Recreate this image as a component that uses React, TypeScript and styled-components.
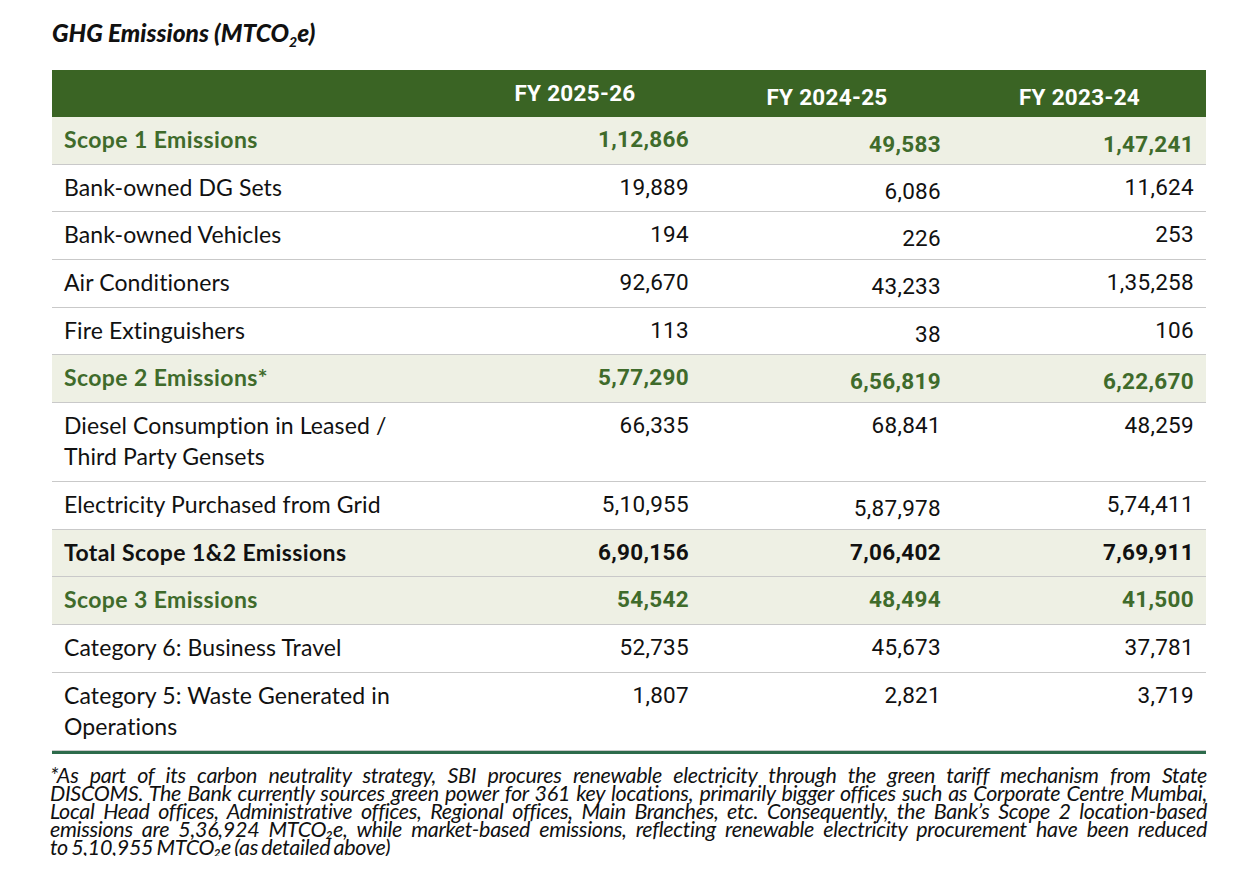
import styled, { createGlobalStyle } from "styled-components";

const GlobalStyle = createGlobalStyle`
  body {
    margin: 0;
    background: #ffffff;
    font-family: "Lato", "Noto Sans", sans-serif;
    color: #111;
  }
`;

type Kind = "group" | "total" | "item";

interface Row {
  label: string[];
  values: string[];
  kind: Kind;
  drops?: number[];
}

const rows: Row[] = [
  { label: ["Scope 1 Emissions"], values: ["1,12,866", "49,583", "1,47,241"], kind: "group", drops: [0, 5, 5] },
  { label: ["Bank-owned DG Sets"], values: ["19,889", "6,086", "11,624"], kind: "item", drops: [0, 4, 0] },
  { label: ["Bank-owned Vehicles"], values: ["194", "226", "253"], kind: "item", drops: [0, 4, 0] },
  { label: ["Air Conditioners"], values: ["92,670", "43,233", "1,35,258"], kind: "item", drops: [0, 4, 0] },
  { label: ["Fire Extinguishers"], values: ["113", "38", "106"], kind: "item", drops: [0, 4, 0] },
  { label: ["Scope 2 Emissions*"], values: ["5,77,290", "6,56,819", "6,22,670"], kind: "group", drops: [0, 4, 4] },
  { label: ["Diesel Consumption in Leased /", "Third Party Gensets"], values: ["66,335", "68,841", "48,259"], kind: "item" },
  { label: ["Electricity Purchased from Grid"], values: ["5,10,955", "5,87,978", "5,74,411"], kind: "item", drops: [0, 4, 0] },
  { label: ["Total Scope 1&2 Emissions"], values: ["6,90,156", "7,06,402", "7,69,911"], kind: "total" },
  { label: ["Scope 3 Emissions"], values: ["54,542", "48,494", "41,500"], kind: "group" },
  { label: ["Category 6: Business Travel"], values: ["52,735", "45,673", "37,781"], kind: "item" },
  { label: ["Category 5: Waste Generated in", "Operations"], values: ["1,807", "2,821", "3,719"], kind: "item" },
];

const years = ["FY 2025-26", "FY 2024-25", "FY 2023-24"];

const footLines = [
  "*As part of its carbon neutrality strategy, SBI procures renewable electricity through the green tariff mechanism from State",
  "DISCOMS. The Bank currently sources green power for 361 key locations, primarily bigger offices such as Corporate Centre Mumbai,",
  "Local Head offices, Administrative offices,  Regional offices, Main Branches, etc. Consequently, the Bank’s Scope 2 location-based",
  "emissions are 5,36,924 MTCO₂e, while market-based emissions, reflecting renewable electricity procurement have been reduced",
  "to 5,10,955 MTCO₂e (as detailed above)",
];

export default function App() {
  return (
    <Page>
      <GlobalStyle />
      <Title>
        GHG Emissions (MTCO<sub>2</sub>e)
      </Title>
      <Table>
        <HeadCell />
        {years.map((y, i) => (
          <HeadCell key={y} $drop={i === 0 ? 0 : 4}>
            {y}
          </HeadCell>
        ))}
        {rows.map((r) => (
          <RowGroup key={r.label[0]}>
            <LabelCell $kind={r.kind}>
              {r.label.map((l) => (
                <span key={l}>{l}</span>
              ))}
            </LabelCell>
            {r.values.map((v, i) => (
              <ValueCell key={i} $kind={r.kind}>
                <Shift $drop={r.drops ? r.drops[i] : 0}>{v}</Shift>
              </ValueCell>
            ))}
          </RowGroup>
        ))}
      </Table>
      <Footnote>
        {footLines.map((l, i) => (
          <FootLine key={i} $last={i === footLines.length - 1}>
            {l}
          </FootLine>
        ))}
      </Footnote>
    </Page>
  );
}

const Page = styled.div`
  padding: 18px 52px 0 52px;
  width: 1154px;
`;

const Title = styled.h1`
  margin: 0 0 23px 0;
  font-family: "Lato", sans-serif;
  font-size: 24.5px;
  font-style: italic;
  font-weight: 900;
  line-height: 29px;
  color: #111;

  sub {
    font-size: 14px;
    line-height: 0;
    vertical-align: -5px;
  }
`;

const Table = styled.div`
  display: grid;
  grid-template-columns: 397px 252px 252px 253px;
  border-bottom: 3px solid #2d6b4b;
`;

const RowGroup = styled.div`
  display: contents;
`;

const HeadCell = styled.div<{ $drop?: number }>`
  background: #3a6424;
  color: #ffffff;
  font-family: "Roboto", sans-serif;
  font-weight: 700;
  font-size: 22.5px;
  height: 47px;
  line-height: 47px;
  padding-top: ${(p) => p.$drop || 0}px;
  box-sizing: border-box;
  text-align: center;
  letter-spacing: 0.3px;
`;

const rowBg = (k: Kind) => (k === "item" ? "#ffffff" : "#eef0e4");
const rowColor = (k: Kind) => (k === "group" ? "#3f6b2b" : "#111111");

const LabelCell = styled.div<{ $kind: Kind }>`
  display: flex;
  flex-direction: column;
  background: ${(p) => rowBg(p.$kind)};
  color: ${(p) => rowColor(p.$kind)};
  font-family: "Lato", sans-serif;
  font-size: 23px;
  font-weight: ${(p) => (p.$kind === "item" ? 400 : 700)};
  letter-spacing: ${(p) => (p.$kind === "item" ? "0.1px" : "0.4px")};
  line-height: 31px;
  padding: 7px 12px 8.7px 12px;
  border-bottom: 1px solid #c9c9c9;
  white-space: nowrap;
`;

const ValueCell = styled.div<{ $kind: Kind }>`
  background: ${(p) => rowBg(p.$kind)};
  color: ${(p) => rowColor(p.$kind)};
  font-family: "Roboto", sans-serif;
  font-size: 22.5px;
  font-weight: ${(p) => (p.$kind === "item" ? 400 : 700)};
  letter-spacing: 0.3px;
  line-height: 31px;
  text-align: right;
  padding: 7px 12px 8.7px 12px;
  border-bottom: 1px solid #c9c9c9;
`;

const Shift = styled.span<{ $drop: number }>`
  position: relative;
  top: ${(p) => p.$drop}px;
`;

const Footnote = styled.div`
  padding: 12px 0 0 0;
  margin-left: -2px;
  width: 1157px;
`;

const FootLine = styled.div<{ $last: boolean }>`
  font-family: "Lato", sans-serif;
  font-style: italic;
  font-size: 21.5px;
  letter-spacing: -0.3px;
  word-spacing: -1.5px;
  line-height: 18px;
  color: #111;
  white-space: nowrap;
  text-align: ${(p) => (p.$last ? "left" : "justify")};
  text-align-last: ${(p) => (p.$last ? "left" : "justify")};
`;
